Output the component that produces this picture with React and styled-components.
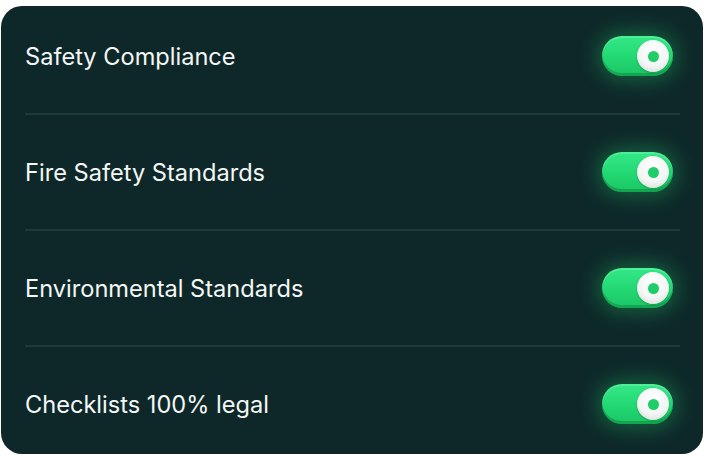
import React from "react";
import styled, { createGlobalStyle } from "styled-components";

const Global = createGlobalStyle`
  html, body { margin: 0; padding: 0; background: #ffffff; }
  body { font-family: Inter, "Noto Sans", sans-serif; }
`;

const Page = styled.div`
  padding: 6px 6px 0 1px;
  width: 709px;
  box-sizing: border-box;
`;

const Card = styled.div`
  width: 702px;
  height: 448px;
  box-sizing: border-box;
  background: #0e2829;
  border-radius: 21px;
  overflow: hidden;
  display: flex;
  flex-direction: column;
`;

const Row = styled.div`
  display: flex;
  align-items: center;
  justify-content: space-between;
  padding: 37px 30px 37px 24px;
  height: 40px;
  flex-shrink: 0;
  &:first-child { padding-top: 30px; }
  &:last-child { padding-bottom: 28px; }
`;

const Divider = styled.div`
  height: 2px;
  margin: 0 23px 0 24px;
  background: #1c3a3a;
  flex-shrink: 0;
`;

const Label = styled.span`
  color: #f4f7f6;
  font-size: 23.6px;
  font-weight: 400;
`;

const Track = styled.div`
  position: relative;
  width: 71px;
  height: 40px;
  border-radius: 20px;
  box-sizing: border-box;
  background: linear-gradient(180deg, #34e887 0%, #22d873 55%, #1bc464 100%);
  box-shadow: 0 0 20px 5px rgba(36, 215, 112, 0.32), inset 0 -3px 0 rgba(10, 135, 62, 0.5), inset 0 2px 0 rgba(130, 255, 185, 0.35);
`;

const Knob = styled.div`
  position: absolute;
  top: 4px;
  right: 4px;
  width: 32px;
  height: 32px;
  border-radius: 50%;
  background: radial-gradient(circle at 50% 35%, #ffffff 0%, #f3f6f5 55%, #cdd8d3 100%);
  box-shadow: 0 1px 2px rgba(0, 60, 30, 0.3);
  display: flex;
  align-items: center;
  justify-content: center;
  &::after {
    content: "";
    width: 11px;
    height: 11px;
    border-radius: 50%;
    background: #1fcd69;
  }
`;

const items = [
  "Safety Compliance",
  "Fire Safety Standards",
  "Environmental Standards",
  "Checklists 100% legal",
];

export default function App() {
  return (
    <>
      <Global />
      <Page>
        <Card>
          {items.map((t, i) => (
            <React.Fragment key={t}>
              {i > 0 && <Divider />}
              <Row>
                <Label>{t}</Label>
                <Track>
                  <Knob />
                </Track>
              </Row>
            </React.Fragment>
          ))}
        </Card>
      </Page>
    </>
  );
}
